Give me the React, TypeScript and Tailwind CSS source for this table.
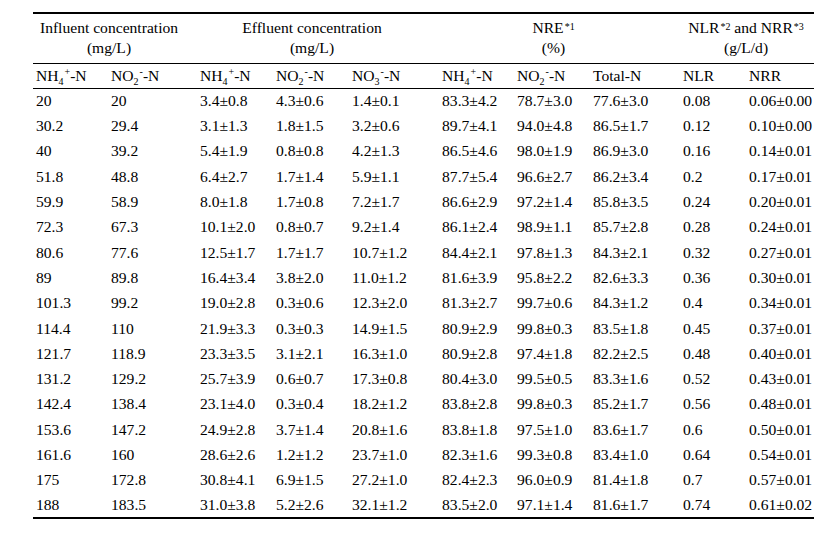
const rows = [
  ["20", "20", "3.4±0.8", "4.3±0.6", "1.4±0.1", "83.3±4.2", "78.7±3.0", "77.6±3.0", "0.08", "0.06±0.00"],
  ["30.2", "29.4", "3.1±1.3", "1.8±1.5", "3.2±0.6", "89.7±4.1", "94.0±4.8", "86.5±1.7", "0.12", "0.10±0.00"],
  ["40", "39.2", "5.4±1.9", "0.8±0.8", "4.2±1.3", "86.5±4.6", "98.0±1.9", "86.9±3.0", "0.16", "0.14±0.01"],
  ["51.8", "48.8", "6.4±2.7", "1.7±1.4", "5.9±1.1", "87.7±5.4", "96.6±2.7", "86.2±3.4", "0.2", "0.17±0.01"],
  ["59.9", "58.9", "8.0±1.8", "1.7±0.8", "7.2±1.7", "86.6±2.9", "97.2±1.4", "85.8±3.5", "0.24", "0.20±0.01"],
  ["72.3", "67.3", "10.1±2.0", "0.8±0.7", "9.2±1.4", "86.1±2.4", "98.9±1.1", "85.7±2.8", "0.28", "0.24±0.01"],
  ["80.6", "77.6", "12.5±1.7", "1.7±1.7", "10.7±1.2", "84.4±2.1", "97.8±1.3", "84.3±2.1", "0.32", "0.27±0.01"],
  ["89", "89.8", "16.4±3.4", "3.8±2.0", "11.0±1.2", "81.6±3.9", "95.8±2.2", "82.6±3.3", "0.36", "0.30±0.01"],
  ["101.3", "99.2", "19.0±2.8", "0.3±0.6", "12.3±2.0", "81.3±2.7", "99.7±0.6", "84.3±1.2", "0.4", "0.34±0.01"],
  ["114.4", "110", "21.9±3.3", "0.3±0.3", "14.9±1.5", "80.9±2.9", "99.8±0.3", "83.5±1.8", "0.45", "0.37±0.01"],
  ["121.7", "118.9", "23.3±3.5", "3.1±2.1", "16.3±1.0", "80.9±2.8", "97.4±1.8", "82.2±2.5", "0.48", "0.40±0.01"],
  ["131.2", "129.2", "25.7±3.9", "0.6±0.7", "17.3±0.8", "80.4±3.0", "99.5±0.5", "83.3±1.6", "0.52", "0.43±0.01"],
  ["142.4", "138.4", "23.1±4.0", "0.3±0.4", "18.2±1.2", "83.8±2.8", "99.8±0.3", "85.2±1.7", "0.56", "0.48±0.01"],
  ["153.6", "147.2", "24.9±2.8", "3.7±1.4", "20.8±1.6", "83.8±1.8", "97.5±1.0", "83.6±1.7", "0.6", "0.50±0.01"],
  ["161.6", "160", "28.6±2.6", "1.2±1.2", "23.7±1.0", "82.3±1.6", "99.3±0.8", "83.4±1.0", "0.64", "0.54±0.01"],
  ["175", "172.8", "30.8±4.1", "6.9±1.5", "27.2±1.0", "82.4±2.3", "96.0±0.9", "81.4±1.8", "0.7", "0.57±0.01"],
  ["188", "183.5", "31.0±3.8", "5.2±2.6", "32.1±1.2", "83.5±2.0", "97.1±1.4", "81.6±1.7", "0.74", "0.61±0.02"],
]

const widths = ["w-[75px]", "w-[89px]", "w-[76px]", "w-[76px]", "w-[90px]", "w-[75px]", "w-[76px]", "w-[90px]", "w-[66px]", "w-[68px]"]

// NH4+ / NO2- : subscript then a raised sign just after it
function Ion({ base, sub, sup }: { base: string; sub: string; sup: string }) {
  return (
    <span className="whitespace-nowrap">
      {base}
      <span className="inline-block text-[10px] leading-none relative top-[4px]">{sub}</span>
      <span className="inline-block text-[10px] leading-none relative top-[-6px] ml-[1px]">{sup}</span>
      -N
    </span>
  )
}

function Mark({ children }: { children: string }) {
  return <sup className="text-[10px] relative top-[-3px] ml-[1px]">{children}</sup>
}

export default function App() {
  return (
    <div className="w-[831px] h-[533px] bg-white text-black font-['Liberation_Serif','Times_New_Roman',serif] text-[15.6px]">
      <div className="pt-[12px] pl-[33px]">
        <table className="table-fixed border-collapse w-[781px]">
          <colgroup>
            {widths.map((w, i) => (
              <col key={i} className={w} />
            ))}
          </colgroup>
          <thead>
            <tr className="border-t-2 border-black h-[50px]">
              <th colSpan={2} className="font-normal text-center pr-[12px] leading-[20px] align-middle">
                Influent concentration
                <br />
                (mg/L)
              </th>
              <th colSpan={3} className="font-normal text-center pr-[12px] leading-[20px] align-middle">
                Effluent concentration
                <br />
                (mg/L)
              </th>
              <th colSpan={3} className="font-normal text-center pr-[12px] leading-[20px] align-middle">
                NRE<Mark>*1</Mark>
                <br />
                (%)
              </th>
              <th colSpan={2} className="font-normal text-center pr-[2px] leading-[20px] align-middle">
                NLR<Mark>*2</Mark> and NRR<Mark>*3</Mark>
                <br />
                (g/L/d)
              </th>
            </tr>
            <tr className="border-t-[1.5px] border-b-[1.5px] border-black h-[25px] text-left">
              <th className="font-normal pl-[3px]"><Ion base="NH" sub="4" sup="+" /></th>
              <th className="font-normal pl-[3px]"><Ion base="NO" sub="2" sup="-" /></th>
              <th className="font-normal pl-[3px]"><Ion base="NH" sub="4" sup="+" /></th>
              <th className="font-normal pl-[3px]"><Ion base="NO" sub="2" sup="-" /></th>
              <th className="font-normal pl-[3px]"><Ion base="NO" sub="3" sup="-" /></th>
              <th className="font-normal pl-[3px]"><Ion base="NH" sub="4" sup="+" /></th>
              <th className="font-normal pl-[3px]"><Ion base="NO" sub="2" sup="-" /></th>
              <th className="font-normal pl-[3px]">Total-N</th>
              <th className="font-normal pl-[3px]">NLR</th>
              <th className="font-normal pl-[3px]">NRR</th>
            </tr>
          </thead>
          <tbody className="border-b-2 border-black">
            {rows.map((r, i) => (
              <tr key={i} className="h-[25.3px]">
                {r.map((c, j) => (
                  <td key={j} className="pl-[3px] whitespace-nowrap leading-none">
                    {c}
                  </td>
                ))}
              </tr>
            ))}
          </tbody>
        </table>
      </div>
    </div>
  )
}
